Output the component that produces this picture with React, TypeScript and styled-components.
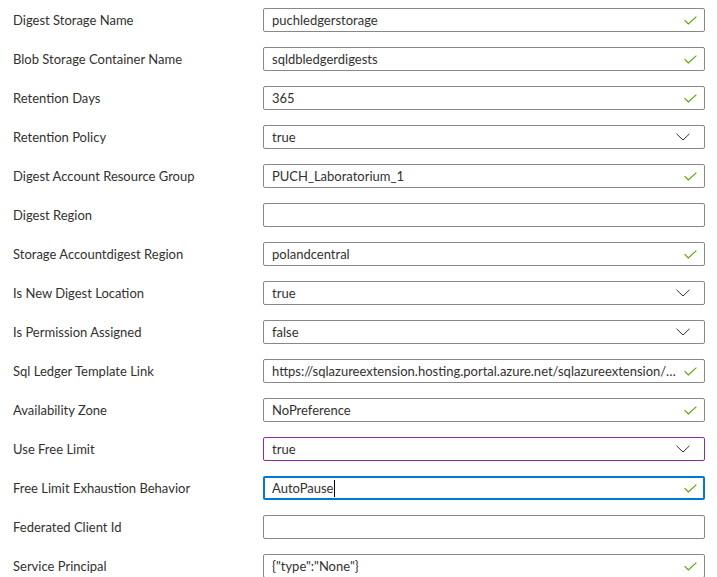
import styled, { createGlobalStyle, css } from "styled-components";

const GlobalStyle = createGlobalStyle`
  html, body {
    margin: 0;
    padding: 0;
    background: #ffffff;
  }
  body {
    font-family: Lato, "Noto Sans", sans-serif;
    color: #323130;
  }
`;

type Kind = "text" | "select";
type State = "normal" | "hover" | "focus";

interface Field {
  label: string;
  value: string;
  kind: Kind;
  valid?: boolean;
  state?: State;
}

const FIELDS: Field[] = [
  { label: "Digest Storage Name", value: "puchledgerstorage", kind: "text", valid: true },
  { label: "Blob Storage Container Name", value: "sqldbledgerdigests", kind: "text", valid: true },
  { label: "Retention Days", value: "365", kind: "text", valid: true },
  { label: "Retention Policy", value: "true", kind: "select" },
  { label: "Digest Account Resource Group", value: "PUCH_Laboratorium_1", kind: "text", valid: true },
  { label: "Digest Region", value: "", kind: "text" },
  { label: "Storage Accountdigest Region", value: "polandcentral", kind: "text", valid: true },
  { label: "Is New Digest Location", value: "true", kind: "select" },
  { label: "Is Permission Assigned", value: "false", kind: "select" },
  {
    label: "Sql Ledger Template Link",
    value:
      "https://sqlazureextension.hosting.portal.azure.net/sqlazureextension/Content/Dynamic/LedgerDigestStorage.json",
    kind: "text",
    valid: true,
  },
  { label: "Availability Zone", value: "NoPreference", kind: "text", valid: true },
  { label: "Use Free Limit", value: "true", kind: "select", state: "hover" },
  { label: "Free Limit Exhaustion Behavior", value: "AutoPause", kind: "text", valid: true, state: "focus" },
  { label: "Federated Client Id", value: "", kind: "text" },
  { label: "Service Principal", value: '{"type":"None"}', kind: "text", valid: true },
];

const CheckIcon = () => (
  <svg width="13" height="9" viewBox="0 0 13 9" fill="none">
    <path d="M0.6 4.2 L4.3 7.9 L12.4 0.6" stroke="#57a300" strokeWidth="1.1" />
  </svg>
);

const ChevronIcon = () => (
  <svg width="14" height="8" viewBox="0 0 14 8" fill="none">
    <path d="M0.5 0.8 L7 7 L13.5 0.8" stroke="#323130" strokeWidth="1" />
  </svg>
);

export default function App() {
  return (
    <>
      <GlobalStyle />
      <St.Form>
        {FIELDS.map((f) => (
          <St.Row key={f.label}>
            <St.Label>{f.label}</St.Label>
            <St.Control $state={f.state ?? "normal"}>
              <St.Value>
                {f.value}
                {f.state === "focus" && <St.Caret />}
              </St.Value>
              {f.kind === "select" ? (
                <St.Icon $select>
                  <ChevronIcon />
                </St.Icon>
              ) : f.valid ? (
                <St.Icon>
                  <CheckIcon />
                </St.Icon>
              ) : null}
            </St.Control>
          </St.Row>
        ))}
      </St.Form>
    </>
  );
}

const St = {
  Form: styled.main`
    display: flex;
    flex-direction: column;
    gap: 15px;
    padding: 8px 0 0 13px;
  `,
  Row: styled.section`
    display: grid;
    grid-template-columns: 250px 442px;
    align-items: center;
    height: 24px;
  `,
  Label: styled.label`
    font-size: 13px;
    color: #323130;
    white-space: nowrap;
  `,
  Control: styled.div<{ $state: State }>`
    box-sizing: border-box;
    display: flex;
    align-items: center;
    height: 24px;
    padding: 0 5px 0 8px;
    border: 1px solid #8a8886;
    border-radius: 2px;
    background: #ffffff;

    ${({ $state }) =>
      $state === "hover" &&
      css`
        border-color: #8a2da5;
      `}

    ${({ $state }) =>
      $state === "focus" &&
      css`
        border: 2px solid #0078d4;
        padding: 0 4px 0 7px;
      `}
  `,
  Value: styled.span`
    display: block;
    flex: 1;
    min-width: 0;
    font-size: 13px;
    line-height: 18px;
    color: #323130;
    white-space: nowrap;
    overflow: hidden;
    text-overflow: ellipsis;
  `,
  Caret: styled.span`
    display: inline-block;
    vertical-align: middle;
    width: 1px;
    height: 17px;
    background: #000000;
    margin-left: 1px;
    margin-top: -2px;
  `,
  Icon: styled.span<{ $select?: boolean }>`
    display: flex;
    align-items: center;
    justify-content: center;
    width: 16px;
    margin-left: 2px;
    margin-right: ${({ $select }) => ($select ? "8px" : "1px")};
  `,
};
